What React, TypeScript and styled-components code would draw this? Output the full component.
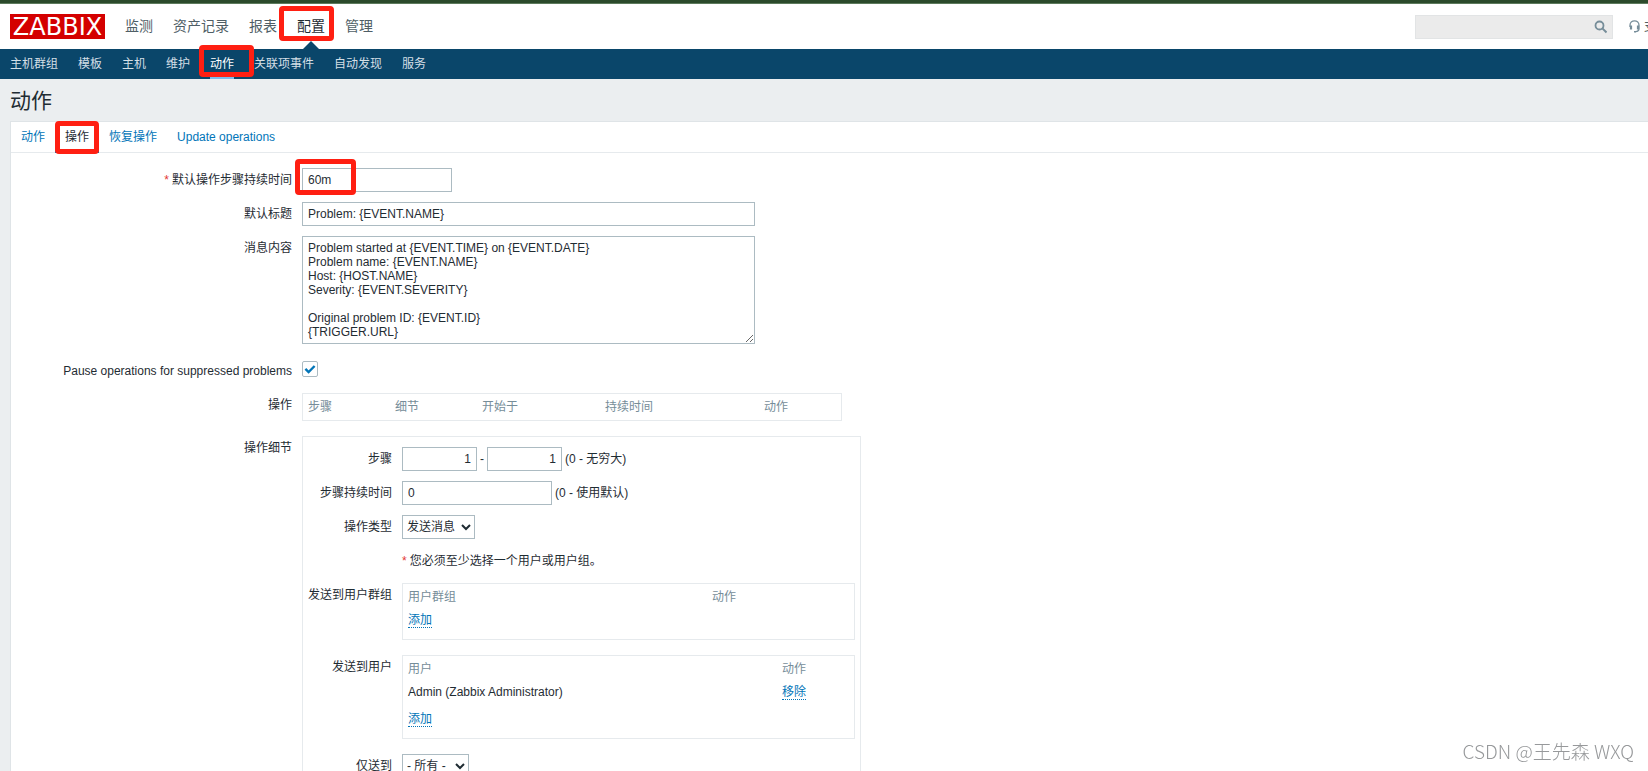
import React from 'react';
import styled, { createGlobalStyle } from 'styled-components';

const color = {
  text: '#1f2c33',
  muted: '#768d99',
  link: '#0275b8',
  navy: '#0a466a',
  page: '#ebeef0',
  line: '#e6eaed',
  field: '#acbbc2',
  mark: '#ff1f12',
};

const GlobalStyle = createGlobalStyle`
  * { box-sizing: border-box; }
  body {
    margin: 0;
    background: ${color.page};
    color: ${color.text};
    font: 12px/14px "Liberation Sans", "Noto Sans CJK SC", sans-serif;
  }
  a { text-decoration: none; color: inherit; }
  input, select, textarea, button { font: inherit; color: inherit; margin: 0; }
  ul { list-style: none; margin: 0; padding: 0; }
`;

const Page = styled.div`
  display: flex;
  flex-direction: column;
  height: 100vh;
  overflow: hidden;
`;

const WindowEdge = styled.div`
  flex: none;
  height: 4px;
  background: #2c4a2b;
  border-bottom: 1px solid #5d7a5c;
`;

const Header = styled.header`
  flex: none;
  display: flex;
  align-items: center;
  height: 45px;
  padding-left: 10px;
  background: #fff;
`;

const Logo = styled.a`
  width: 95px;
  height: 25px;
  background: #d40000;
  color: #fff;
  font: 24px/27px "DejaVu Sans", sans-serif;
  text-align: center;
`;

const MainMenu = styled.ul`
  display: flex;
  gap: 20px;
  margin-left: 20px;
  font-size: 14px;
  line-height: 45px;
  color: #4f5e66;
`;

const MainItem = styled.li<{ $active?: boolean }>`
  position: relative;
  color: ${(p) => (p.$active ? color.text : 'inherit')};
  &::after {
    content: '';
    display: ${(p) => (p.$active ? 'block' : 'none')};
    position: absolute;
    left: 50%;
    bottom: 0;
    margin-left: -8px;
    border: 8px solid transparent;
    border-top: 0;
    border-bottom-color: ${color.navy};
  }
`;

/* Red frame that calls attention to the element it is placed in */
const Highlight = styled.span<{ $inset: string }>`
  position: absolute;
  inset: ${(p) => p.$inset};
  z-index: 2;
  border: 5px solid ${color.mark};
  border-radius: 4px;
  pointer-events: none;
`;

const HeaderTools = styled.div`
  display: flex;
  align-items: center;
  margin-left: auto;
`;

const Search = styled.form`
  display: flex;
  width: 198px;
  height: 24px;
  background: #ebebeb;
  border: 1px solid #e2e4e5;
`;

const SearchInput = styled.input`
  flex: 1;
  min-width: 0;
  border: 0;
  padding: 0 5px;
  background: none;
  outline: none;
`;

const SearchButton = styled.button`
  display: flex;
  align-items: center;
  justify-content: center;
  width: 24px;
  padding: 0;
  border: 0;
  background: none;
`;

const Support = styled.a`
  display: flex;
  align-items: center;
  gap: 4px;
  width: 19px;
  margin-left: 16px;
  overflow: hidden;
  white-space: nowrap;
  color: #4f5e66;
  svg { flex: none; }
`;

const SubMenu = styled.ul`
  flex: none;
  display: flex;
  gap: 20px;
  height: 30px;
  padding-left: 10px;
  background: ${color.navy};
  color: #d4dfe6;
  line-height: 30px;
`;

const SubItem = styled.li<{ $active?: boolean }>`
  position: relative;
  height: 30px;
  color: ${(p) => (p.$active ? '#fff' : 'inherit')};
  border-bottom: 3px solid ${(p) => (p.$active ? '#7dbbea' : 'transparent')};
`;

const Title = styled.h1`
  flex: none;
  margin: 0;
  padding: 2px 0 0 10px;
  font-size: 21px;
  font-weight: 400;
  line-height: 40px;
`;

const Panel = styled.main`
  flex: 1 0 auto;
  margin-left: 10px;
  background: #fff;
  border: solid #dfe4e7;
  border-width: 1px 0 0 1px;
`;

const Tabs = styled.ul`
  display: flex;
  height: 31px;
  border-bottom: 1px solid ${color.line};
`;

const Tab = styled.li<{ $active?: boolean }>`
  position: relative;
  height: 31px;
  padding: 0 10px;
  line-height: 31px;
  color: ${(p) => (p.$active ? color.text : color.link)};
  border-bottom: 3px solid ${(p) => (p.$active ? color.link : 'transparent')};
`;

const Form = styled.form`
  display: flex;
  flex-direction: column;
  gap: 10px;
  padding: 15px 0;
`;

const Row = styled.div<{ $labelWidth: number }>`
  display: grid;
  grid-template-columns: ${(p) => p.$labelWidth}px 1fr;
  column-gap: 10px;
  align-items: start;
`;

const labelStyle = `
  line-height: 24px;
  text-align: right;
  white-space: nowrap;
`;
const Label = styled.label`${labelStyle}`;
const Caption = styled.span`${labelStyle}`;

const Star = styled.span`
  color: #e33734;
  margin-right: 3px;
`;

const Field = styled.div<{ $block?: boolean }>`
  display: flex;
  align-items: center;
  gap: 3px;
  min-height: 24px;
  padding-bottom: ${(p) => (p.$block ? 5 : 0)}px;
`;

const MarkedInput = styled.span`
  position: relative;
  display: flex;
`;

const TextInput = styled.input<{ $width: number; $right?: boolean }>`
  width: ${(p) => p.$width}px;
  height: 24px;
  padding: 0 5px;
  border: 1px solid ${color.field};
  background: #fff;
  text-align: ${(p) => (p.$right ? 'right' : 'left')};
`;

const TextArea = styled.textarea`
  display: block;
  width: 453px;
  height: 108px;
  padding: 4px 5px;
  border: 1px solid ${color.field};
  line-height: 14px;
  overflow: hidden;
`;

const Select = styled.select<{ $width: number }>`
  width: ${(p) => p.$width}px;
  height: 24px;
  padding: 0;
  border: 1px solid ${color.field};
  border-radius: 0;
  background: #fff;
`;

const CheckBox = styled.span`
  position: relative;
  display: flex;
  width: 16px;
  height: 16px;
  margin-bottom: 4px;
  svg {
    position: absolute;
    inset: 0;
    pointer-events: none;
  }
  input:not(:checked) + svg { display: none; }
`;

const CheckInput = styled.input`
  appearance: none;
  width: 16px;
  height: 16px;
  border: 1px solid ${color.field};
  border-radius: 2px;
  background: #fff;
`;

const Details = styled.div`
  display: flex;
  flex-direction: column;
  gap: 10px;
  width: max-content;
  padding: 10px 5px;
  border: 1px solid ${color.line};
`;

const Frame = styled.div<{ $width: number }>`
  width: ${(p) => p.$width}px;
  border: 1px solid ${color.line};
`;

const Table = styled.table`
  width: 100%;
  table-layout: fixed;
  border-collapse: collapse;
`;

const Th = styled.th<{ $width?: number }>`
  width: ${(p) => (p.$width ? `${p.$width}px` : 'auto')};
  padding: 6px 5px 4px;
  color: ${color.muted};
  font-weight: 400;
  text-align: left;
`;

const HeadOnlyTh = styled(Th)`
  padding: 6px 5px;
`;

const Td = styled.td`
  height: 24px;
  padding: 0 5px;
`;

const AddTd = styled.td<{ $top: number }>`
  padding: ${(p) => p.$top}px 5px 11px;
  line-height: 14px;
`;

const Action = styled.a`
  display: block;
  width: max-content;
  height: 15px;
  line-height: 14px;
  color: ${color.link};
  border-bottom: 1px dotted ${color.link};
`;

const Watermark = styled.div`
  position: fixed;
  right: 14px;
  bottom: 8px;
  color: #97999b;
  font: 300 19px/24px "Noto Sans CJK SC", sans-serif;
`;

const mainMenu = ['监测', '资产记录', '报表', '配置', '管理'];
const subMenu = ['主机群组', '模板', '主机', '维护', '动作', '关联项事件', '自动发现', '服务'];
const tabs = ['动作', '操作', '恢复操作', 'Update operations'];

const message = `Problem started at {EVENT.TIME} on {EVENT.DATE}
Problem name: {EVENT.NAME}
Host: {HOST.NAME}
Severity: {EVENT.SEVERITY}

Original problem ID: {EVENT.ID}
{TRIGGER.URL}`;

const OUTER = 281;
const INNER = 84;

export default function App() {
  return (
    <Page>
      <GlobalStyle />
      <WindowEdge />
      <Header>
        <Logo href="#">ZABBIX</Logo>
        <nav>
          <MainMenu>
            {mainMenu.map((name) => (
              <MainItem key={name} $active={name === '配置'}>
                <a href="#">{name}</a>
                {name === '配置' && <Highlight $inset="2px -9px 8px -18px" />}
              </MainItem>
            ))}
          </MainMenu>
        </nav>
        <HeaderTools>
          <Search role="search">
            <SearchInput type="search" aria-label="搜索" />
            <SearchButton type="button" aria-label="搜索">
              <svg width="14" height="14" viewBox="0 0 14 14" fill="none" stroke={color.muted}>
                <circle cx="6.5" cy="5.5" r="4" strokeWidth="1.8" />
                <path d="M9.4 8.4 L13.5 12.5" strokeWidth="2" />
              </svg>
            </SearchButton>
          </Search>
          <Support href="#">
            <svg width="11" height="13" viewBox="0 0 11 13" fill="none" stroke={color.muted}>
              <path d="M1 7 V5.2 A4.5 4.4 0 0 1 10 5.2 V8.8 Q10 11.4 6.5 11.6" strokeWidth="1.3" />
              <path d="M2 5.6 V9.6 M9 5.6 V9.6" strokeWidth="2.2" />
              <path d="M5 11.7 H7" strokeWidth="1.6" />
            </svg>
            支
          </Support>
        </HeaderTools>
      </Header>
      <nav>
        <SubMenu>
          {subMenu.map((name) => (
            <SubItem key={name} $active={name === '动作'}>
              <a href="#">{name}</a>
              {name === '动作' && <Highlight $inset="-4px -20px -1px -11px" />}
            </SubItem>
          ))}
        </SubMenu>
      </nav>
      <Title>动作</Title>
      <Panel>
        <Tabs>
          {tabs.map((name) => (
            <Tab key={name} $active={name === '操作'}>
              <a href="#">{name}</a>
              {name === '操作' && <Highlight $inset="-1px 0 -4px 0" />}
            </Tab>
          ))}
        </Tabs>
        <Form>
          <Row $labelWidth={OUTER}>
            <Label htmlFor="period"><Star>*</Star>默认操作步骤持续时间</Label>
            <Field>
              <MarkedInput>
                <TextInput id="period" $width={150} defaultValue="60m" />
                <Highlight $inset="-9px 96px -3px -7px" />
              </MarkedInput>
            </Field>
          </Row>
          <Row $labelWidth={OUTER}>
            <Label htmlFor="subject">默认标题</Label>
            <Field><TextInput id="subject" $width={453} defaultValue="Problem: {EVENT.NAME}" /></Field>
          </Row>
          <Row $labelWidth={OUTER}>
            <Label htmlFor="message">消息内容</Label>
            <Field $block><TextArea id="message" defaultValue={message} /></Field>
          </Row>
          <Row $labelWidth={OUTER}>
            <Label htmlFor="pause">Pause operations for suppressed problems</Label>
            <Field>
              <CheckBox>
                <CheckInput id="pause" type="checkbox" defaultChecked />
                <svg width="16" height="16" viewBox="0 0 16 16" fill="none" stroke={color.link} strokeWidth="2.4">
                  <path d="M3.4 7.8 L6.6 11 L12.6 5" />
                </svg>
              </CheckBox>
            </Field>
          </Row>
          <Row $labelWidth={OUTER}>
            <Caption>操作</Caption>
            <Field $block>
              <Frame $width={540}>
                <Table>
                  <thead>
                    <tr>
                      <HeadOnlyTh $width={87}>步骤</HeadOnlyTh>
                      <HeadOnlyTh $width={87}>细节</HeadOnlyTh>
                      <HeadOnlyTh $width={123}>开始于</HeadOnlyTh>
                      <HeadOnlyTh $width={159}>持续时间</HeadOnlyTh>
                      <HeadOnlyTh>动作</HeadOnlyTh>
                    </tr>
                  </thead>
                </Table>
              </Frame>
            </Field>
          </Row>
          <Row $labelWidth={OUTER}>
            <Caption>操作细节</Caption>
            <Details>
              <Row $labelWidth={INNER}>
                <Label htmlFor="step-from">步骤</Label>
                <Field>
                  <TextInput id="step-from" $width={75} $right defaultValue="1" />
                  <span>-</span>
                  <TextInput aria-label="步骤" $width={75} $right defaultValue="1" />
                  <span>(0 - 无穷大)</span>
                </Field>
              </Row>
              <Row $labelWidth={INNER}>
                <Label htmlFor="step-duration">步骤持续时间</Label>
                <Field>
                  <TextInput id="step-duration" $width={150} defaultValue="0" />
                  <span>(0 - 使用默认)</span>
                </Field>
              </Row>
              <Row $labelWidth={INNER}>
                <Label htmlFor="op-type">操作类型</Label>
                <Field>
                  <Select id="op-type" $width={73}><option>发送消息</option></Select>
                </Field>
              </Row>
              <Row $labelWidth={INNER}>
                <span />
                <Field><span><Star>*</Star>您必须至少选择一个用户或用户组。</span></Field>
              </Row>
              <Row $labelWidth={INNER}>
                <Caption>发送到用户群组</Caption>
                <Field $block>
                  <Frame $width={453}>
                    <Table>
                      <thead>
                        <tr><Th $width={304}>用户群组</Th><Th>动作</Th></tr>
                      </thead>
                      <tbody>
                        <tr><AddTd $top={5} colSpan={2}><Action href="#">添加</Action></AddTd></tr>
                      </tbody>
                    </Table>
                  </Frame>
                </Field>
              </Row>
              <Row $labelWidth={INNER}>
                <Caption>发送到用户</Caption>
                <Field $block>
                  <Frame $width={453}>
                    <Table>
                      <thead>
                        <tr><Th $width={374}>用户</Th><Th>动作</Th></tr>
                      </thead>
                      <tbody>
                        <tr><Td>Admin (Zabbix Administrator)</Td><Td><Action href="#">移除</Action></Td></tr>
                        <tr><AddTd $top={8} colSpan={2}><Action href="#">添加</Action></AddTd></tr>
                      </tbody>
                    </Table>
                  </Frame>
                </Field>
              </Row>
              <Row $labelWidth={INNER}>
                <Label htmlFor="media">仅送到</Label>
                <Field>
                  <Select id="media" $width={67}><option>- 所有 -</option></Select>
                </Field>
              </Row>
            </Details>
          </Row>
        </Form>
      </Panel>
      <Watermark>CSDN @王先森 WXQ</Watermark>
    </Page>
  );
}
